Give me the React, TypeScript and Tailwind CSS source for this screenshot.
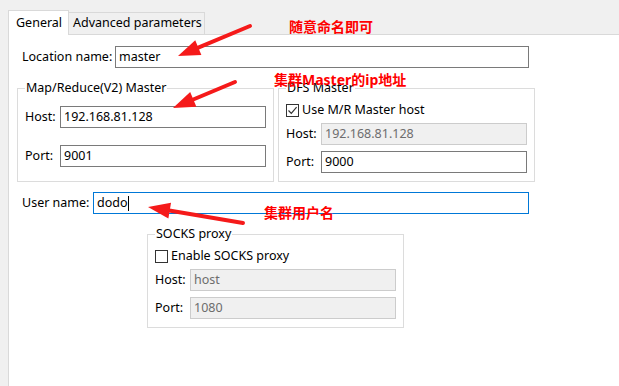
import React from "react";

type BoxProps = { value: string; width: string; disabled?: boolean; focused?: boolean; caret?: boolean };

const TextBox: React.FC<BoxProps> = ({ value, width, disabled, focused, caret }) => {
  const tone = disabled
    ? "bg-[#f0f0f0] border-[#cccccc] text-[#6d6d6d]"
    : focused
    ? "bg-white border-[#0078d7] text-black"
    : "bg-white border-[#7a7a7a] text-black";
  return (
    <div className={`h-[22px] border px-[3px] flex items-center leading-none ${width} ${tone}`}>
      <span>{value}</span>
      {caret && <span className="w-px h-[15px] bg-black" />}
    </div>
  );
};

const Field: React.FC<{ label: string; labelWidth: string } & BoxProps> = ({ label, labelWidth, ...box }) => (
  <div className="flex items-center h-[22px]">
    <span className={`${labelWidth} shrink-0 whitespace-nowrap`}>{label}</span>
    <TextBox {...box} />
  </div>
);

const Check: React.FC<{ checked?: boolean; label: string }> = ({ checked, label }) => (
  <div className="flex items-center h-[14px]">
    <div className="w-[13px] h-[13px] border border-[#333333] bg-white flex items-center justify-center">
      {checked && (
        <svg width="11" height="11" viewBox="0 0 11 11">
          <path d="M1.5 5.5 L4.3 8.3 L9.6 2.2" fill="none" stroke="#333" strokeWidth="1.2" />
        </svg>
      )}
    </div>
    <span className="ml-[3px] whitespace-nowrap">{label}</span>
  </div>
);

const Arrow: React.FC<{ x1: number; y1: number; x2: number; y2: number }> = ({ x1, y1, x2, y2 }) => {
  const dx = x2 - x1;
  const dy = y2 - y1;
  const len = Math.hypot(dx, dy);
  const ux = dx / len;
  const uy = dy / len;
  const bx = x2 - ux * 22;
  const by = y2 - uy * 22;
  const nx = -uy;
  const ny = ux;
  const pts = `${x2},${y2} ${bx + nx * 8},${by + ny * 8} ${bx - nx * 8},${by - ny * 8}`;
  return (
    <g>
      <line x1={x1} y1={y1} x2={bx + ux * 2} y2={by + uy * 2} stroke="#f51a1a" strokeWidth="4" strokeLinecap="round" />
      <polygon points={pts} fill="#f51a1a" />
    </g>
  );
};

export default function App() {
  return (
    <div className="relative w-[619px] h-[386px] overflow-hidden bg-[#f0f0f0] pl-2 pt-[10px] flex flex-col font-['Noto_Sans','Noto_Sans_CJK_SC',sans-serif] text-[12.5px] text-black">
      {/* tabs */}
      <div className="flex items-end h-[24px] relative z-10">
        <div className="h-[25px] -mb-px w-[61px] border border-b-0 border-[#d9d9d9] bg-white px-[7px] flex items-center leading-none whitespace-nowrap">
          General
        </div>
        <div className="h-[22px] w-[136px] border-t border-r border-[#d9d9d9] bg-[#f0f0f0] pl-[4px] flex items-center leading-none whitespace-nowrap">
          Advanced parameters
        </div>
      </div>

      {/* panel */}
      <div className="flex-1 bg-white border-l border-t border-[#d9d9d9] pl-[8px] pt-[11px]">
        <div className="pl-[5px]">
          <Field label="Location name:" labelWidth="w-[93px]" value="master" width="w-[414px]" />
        </div>

        <div className="flex gap-[4px] mt-[12px]">
          <fieldset className="w-[257px] h-[102px] border border-[#dcdcdc] px-[7px] pt-[10px]">
            <legend className="px-[1px] leading-4 whitespace-nowrap">Map/Reduce(V2) Master</legend>
            <Field label="Host:" labelWidth="w-[35px]" value="192.168.81.128" width="w-[206px]" />
            <div className="mt-[17px]">
              <Field label="Port:" labelWidth="w-[35px]" value="9001" width="w-[206px]" />
            </div>
          </fieldset>
          <fieldset className="w-[256px] h-[102px] border border-[#dcdcdc] px-[7px] pt-[7px]">
            <legend className="px-[1px] leading-4 whitespace-nowrap">DFS Master</legend>
            <Check checked label="Use M/R Master host" />
            <div className="mt-[6px]">
              <Field label="Host:" labelWidth="w-[35px]" value="192.168.81.128" width="w-[206px]" disabled />
            </div>
            <div className="mt-[6px]">
              <Field label="Port:" labelWidth="w-[35px]" value="9000" width="w-[206px]" />
            </div>
          </fieldset>
        </div>

        <div className="pl-[5px] mt-[10px]">
          <Field label="User name:" labelWidth="w-[71px]" value="dodo" width="w-[436px]" focused caret />
        </div>

        <fieldset className="ml-[130px] mt-[12px] w-[257px] h-[102px] border border-[#dcdcdc] px-[7px] pt-[7px]">
          <legend className="px-[1px] leading-4 whitespace-nowrap">SOCKS proxy</legend>
          <Check label="Enable SOCKS proxy" />
          <div className="mt-[6px]">
            <Field label="Host:" labelWidth="w-[35px]" value="host" width="w-[206px]" disabled />
          </div>
          <div className="mt-[6px]">
            <Field label="Port:" labelWidth="w-[35px]" value="1080" width="w-[206px]" disabled />
          </div>
        </fieldset>
      </div>

      {/* red annotations over the dialog */}
      <svg className="absolute inset-0 pointer-events-none" width="619" height="386">
        <Arrow x1={250} y1={26} x2={178} y2={56} />
        <Arrow x1={235} y1={82} x2={173} y2={108} />
        <Arrow x1={243} y1={223} x2={148} y2={207} />
      </svg>
      <span className="absolute left-[289px] top-[20px] text-[14px] leading-none font-bold text-[#ff0000]">随意命名即可</span>
      <span className="absolute left-[274px] top-[73px] text-[14px] leading-none font-bold text-[#ff0000]">集群Master的ip地址</span>
      <span className="absolute left-[264px] top-[206px] text-[14px] leading-none font-bold text-[#ff0000]">集群用户名</span>
    </div>
  );
}
